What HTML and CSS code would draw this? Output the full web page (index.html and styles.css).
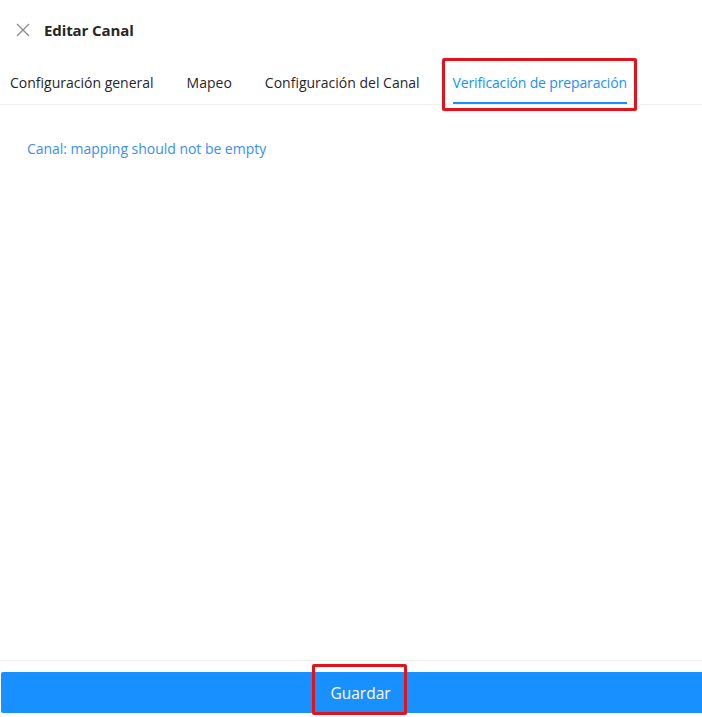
FILE: index.html
```html
<!DOCTYPE html>
<html lang="es">
<head>
<meta charset="utf-8">
<title>Editar Canal</title>
<link rel="stylesheet" href="styles.css">
</head>
<body>
<div class="drawer">
  <header class="header">
    <svg class="close" viewBox="0 0 14 14" width="14" height="14" aria-hidden="true">
      <path d="M1 1 L13 13 M13 1 L1 13" stroke="#8c8c8c" stroke-width="1.3" fill="none"/>
    </svg>
    <h1 class="title">Editar Canal</h1>
  </header>
  <nav class="tabs">
    <div class="tab">Configuración general</div>
    <div class="tab">Mapeo</div>
    <div class="tab">Configuración del Canal</div>
    <div class="tab active">Verificación de preparación<span class="mark"></span></div>
  </nav>
  <main class="content">
    <p class="msg">Canal: mapping should not be empty</p>
  </main>
  <footer class="footer">
    <button class="save"><span class="save-label">Guardar<span class="mark mark-btn"></span></span></button>
  </footer>
</div>
</body>
</html>
```
FILE: styles.css
```css
html, body {
  margin: 0;
  padding: 0;
  background: #fff;
}
body {
  font-family: "Open Sans", "Noto Sans", sans-serif;
  color: rgba(0, 0, 0, 0.85);
}
.drawer {
  display: flex;
  flex-direction: column;
  height: 717px;
}
.header {
  display: flex;
  align-items: center;
  height: 60px;
  padding-left: 16px;
  box-sizing: border-box;
}
.close {
  display: block;
  margin-right: 14px;
}
.title {
  margin: 0;
  font-size: 15px;
  font-weight: 700;
  color: #262626;
  letter-spacing: -0.1px;
}
.tabs {
  display: flex;
  gap: 33px;
  padding-left: 10px;
  height: 44px;
  border-bottom: 1px solid #f0f0f0;
}
.tab {
  position: relative;
  display: flex;
  align-items: center;
  font-size: 14px;
  color: #262626;
}
.tab.active {
  color: #1890ff;
  letter-spacing: -0.15px;
}
.tab.active::after {
  content: "";
  position: absolute;
  left: 0;
  right: 0;
  bottom: 0;
  height: 2px;
  background: #1890ff;
}
.mark {
  position: absolute;
  left: -11px;
  right: -10px;
  top: -2px;
  bottom: -7px;
  border: 3px solid #e3131b;
  border-radius: 2px;
  pointer-events: none;
}
.content {
  flex: 1;
  padding: 34px 27px 0;
}
.msg {
  margin: 0;
  font-size: 14px;
  color: #3a8ef6;
  letter-spacing: -0.03px;
}
.footer {
  border-top: 1px solid #f0f0f0;
  padding: 11px 0 4px 1px;
}
.save {
  display: flex;
  justify-content: center;
  align-items: center;
  width: 100%;
  height: 41px;
  border: 0;
  border-radius: 2px 0 0 2px;
  background: #1890ff;
  color: #fff;
  font-family: "Open Sans", "Noto Sans", sans-serif;
  font-size: 15.5px;
  padding: 0;
  padding-left: 18px;
}
.save-label {
  position: relative;
}
.mark-btn {
  left: -18px;
  right: -16px;
  top: -18px;
  bottom: -11px;
}
```
